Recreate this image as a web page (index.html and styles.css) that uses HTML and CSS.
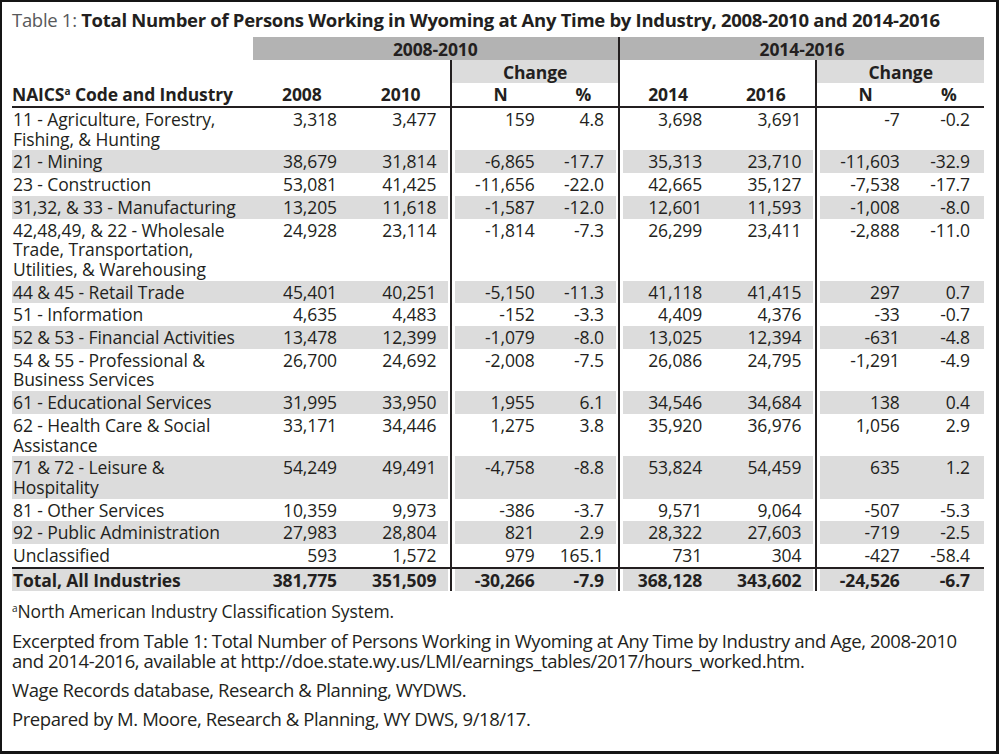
FILE: index.html
```html
<!DOCTYPE html>
<html lang="en">
<head>
<meta charset="utf-8">
<title>Table 1: Total Number of Persons Working in Wyoming</title>
<link rel="stylesheet" href="styles.css">
</head>
<body>
<div class="frame">
  <h1 class="title"><span class="lbl">Table 1:</span> Total Number of Persons Working in Wyoming at Any Time by Industry, 2008-2010 and 2014-2016</h1>
  <table class="data">
    <colgroup>
      <col class="c-ind"><col class="c-num"><col class="c-num2"><col class="c-n"><col class="c-p"><col class="c-num"><col class="c-num2"><col class="c-n"><col class="c-p2">
    </colgroup>
    <thead>
      <tr class="h1">
        <th></th>
        <th colspan="4" class="band">2008-2010</th>
        <th colspan="4" class="band sep">2014-2016</th>
      </tr>
      <tr class="h2">
        <th></th><th></th><th></th>
        <th colspan="2" class="lband sep">Change</th>
        <th class="sep"></th><th></th>
        <th colspan="2" class="lband sep">Change</th>
      </tr>
      <tr class="h3">
        <th class="ind">NAICS<sup>a</sup> Code and Industry</th>
        <th>2008</th><th>2010</th>
        <th class="sep">N</th><th>%</th>
        <th class="sep">2014</th><th>2016</th>
        <th class="sep">N</th><th>%</th>
      </tr>
    </thead>
    <tbody>
      <tr><td class="ind">11 - Agriculture, Forestry,<br>Fishing, &amp; Hunting</td><td>3,318</td><td class="pre">3,477</td><td class="sep">159</td><td class="pre">4.8</td><td class="sep">3,698</td><td class="pre">3,691</td><td class="sep">-7</td><td>-0.2</td></tr>
      <tr class="sh"><td class="ind">21 - Mining</td><td>38,679</td><td class="pre">31,814</td><td class="sep">-6,865</td><td class="pre">-17.7</td><td class="sep">35,313</td><td class="pre">23,710</td><td class="sep">-11,603</td><td>-32.9</td></tr>
      <tr><td class="ind">23 - Construction</td><td>53,081</td><td class="pre">41,425</td><td class="sep">-11,656</td><td class="pre">-22.0</td><td class="sep">42,665</td><td class="pre">35,127</td><td class="sep">-7,538</td><td>-17.7</td></tr>
      <tr class="sh"><td class="ind">31,32, &amp; 33 - Manufacturing</td><td>13,205</td><td class="pre">11,618</td><td class="sep">-1,587</td><td class="pre">-12.0</td><td class="sep">12,601</td><td class="pre">11,593</td><td class="sep">-1,008</td><td>-8.0</td></tr>
      <tr><td class="ind">42,48,49, &amp; 22 - Wholesale<br>Trade, Transportation,<br>Utilities, &amp; Warehousing</td><td>24,928</td><td class="pre">23,114</td><td class="sep">-1,814</td><td class="pre">-7.3</td><td class="sep">26,299</td><td class="pre">23,411</td><td class="sep">-2,888</td><td>-11.0</td></tr>
      <tr class="sh"><td class="ind">44 &amp; 45 - Retail Trade</td><td>45,401</td><td class="pre">40,251</td><td class="sep">-5,150</td><td class="pre">-11.3</td><td class="sep">41,118</td><td class="pre">41,415</td><td class="sep">297</td><td>0.7</td></tr>
      <tr><td class="ind">51 - Information</td><td>4,635</td><td class="pre">4,483</td><td class="sep">-152</td><td class="pre">-3.3</td><td class="sep">4,409</td><td class="pre">4,376</td><td class="sep">-33</td><td>-0.7</td></tr>
      <tr class="sh"><td class="ind">52 &amp; 53 - Financial Activities</td><td>13,478</td><td class="pre">12,399</td><td class="sep">-1,079</td><td class="pre">-8.0</td><td class="sep">13,025</td><td class="pre">12,394</td><td class="sep">-631</td><td>-4.8</td></tr>
      <tr><td class="ind">54 &amp; 55 - Professional &amp;<br>Business Services</td><td>26,700</td><td class="pre">24,692</td><td class="sep">-2,008</td><td class="pre">-7.5</td><td class="sep">26,086</td><td class="pre">24,795</td><td class="sep">-1,291</td><td>-4.9</td></tr>
      <tr class="sh"><td class="ind">61 - Educational Services</td><td>31,995</td><td class="pre">33,950</td><td class="sep">1,955</td><td class="pre">6.1</td><td class="sep">34,546</td><td class="pre">34,684</td><td class="sep">138</td><td>0.4</td></tr>
      <tr><td class="ind">62 - Health Care &amp; Social<br>Assistance</td><td>33,171</td><td class="pre">34,446</td><td class="sep">1,275</td><td class="pre">3.8</td><td class="sep">35,920</td><td class="pre">36,976</td><td class="sep">1,056</td><td>2.9</td></tr>
      <tr class="sh"><td class="ind">71 &amp; 72 - Leisure &amp;<br>Hospitality</td><td>54,249</td><td class="pre">49,491</td><td class="sep">-4,758</td><td class="pre">-8.8</td><td class="sep">53,824</td><td class="pre">54,459</td><td class="sep">635</td><td>1.2</td></tr>
      <tr><td class="ind">81 - Other Services</td><td>10,359</td><td class="pre">9,973</td><td class="sep">-386</td><td class="pre">-3.7</td><td class="sep">9,571</td><td class="pre">9,064</td><td class="sep">-507</td><td>-5.3</td></tr>
      <tr class="sh"><td class="ind">92 - Public Administration</td><td>27,983</td><td class="pre">28,804</td><td class="sep">821</td><td class="pre">2.9</td><td class="sep">28,322</td><td class="pre">27,603</td><td class="sep">-719</td><td>-2.5</td></tr>
      <tr><td class="ind">Unclassified</td><td>593</td><td class="pre">1,572</td><td class="sep">979</td><td class="pre">165.1</td><td class="sep">731</td><td class="pre">304</td><td class="sep">-427</td><td>-58.4</td></tr>
      <tr class="sh total"><td class="ind">Total, All Industries</td><td>381,775</td><td class="pre">351,509</td><td class="sep">-30,266</td><td class="pre">-7.9</td><td class="sep">368,128</td><td class="pre">343,602</td><td class="sep">-24,526</td><td>-6.7</td></tr>
    </tbody>
  </table>
  <div class="notes">
    <p class="fn"><sup>a</sup>North American Industry Classification System.</p>
    <p class="cond">Excerpted from Table 1: Total Number of Persons Working in Wyoming at Any Time by Industry and Age, 2008-2010<br>and 2014-2016, available at http://doe.state.wy.us/LMI/earnings_tables/2017/hours_worked.htm.</p>
    <p class="cond">Wage Records database, Research &amp; Planning, WYDWS.</p>
    <p class="cond">Prepared by M. Moore, Research &amp; Planning, WY DWS, 9/18/17.</p>
  </div>
</div>
</body>
</html>
```
FILE: styles.css
```css
html, body {
  margin: 0;
  padding: 0;
  background: #ffffff;
}
body {
  font-family: "Open Sans", "Noto Sans", sans-serif;
  color: #231f20;
}
.frame {
  box-sizing: border-box;
  width: 999px;
  height: 754px;
  border: 2px solid #151515;
  border-right-width: 3px;
  border-bottom-width: 3px;
  padding: 0 0 0 10px;
  background: #fff;
}
.title {
  margin: 0;
  padding: 6px 0 0 0;
  height: 29px;
  font-size: 18.5px;
  line-height: 24px;
  font-weight: 700;
  letter-spacing: -0.3px;
  color: #231f20;
  white-space: nowrap;
}
.title .lbl {
  font-weight: 400;
  color: #58595b;
}
.data {
  border-collapse: separate;
  border-spacing: 0;
  table-layout: fixed;
  width: 972px;
  font-size: 17.5px;
  letter-spacing: -0.1px;
}
.c-ind { width: 240px; }
.c-num { width: 98px; }
.c-num2 { width: 99px; }
.c-n { width: 98px; }
.c-p { width: 69px; }
.c-p2 { width: 70px; }
.data th {
  font-weight: 700;
  padding: 0;
  height: 23px;
  line-height: 22px;
  text-align: center;
  vertical-align: middle;
}
.data th.ind {
  text-align: left;
}
.data .band {
  background: #b3b3b3;
}
.data .lband {
  background: #dcdcdc;
}
.data .sep {
  border-left: 2px solid #231f20;
}
.h3 th {
  border-bottom: 2px solid #231f20;
  height: 22px;
  vertical-align: bottom;
  padding-bottom: 1px;
}
.data sup {
  font-size: 10px;
  line-height: 0;
  vertical-align: 6px;
  letter-spacing: 0;
}
.data td {
  padding: 2px 14px 1px 0;
  line-height: 19.7px;
  text-align: right;
  vertical-align: top;
  white-space: nowrap;
}
.data td.ind {
  text-align: left;
  padding-left: 1px;
  padding-right: 0;
}
.data td.sep {
  box-shadow: inset 3px 0 0 #fff;
}
.data td.pre {
  box-shadow: inset -2px 0 0 #fff;
}
.data tr.sh td {
  background: #dcdcdc;
}
.data tr.total td {
  font-weight: 700;
  border-top: 2px solid #231f20;
}
.data tr.total td.sep {
  border-left: 2px solid #231f20;
}
.notes {
  padding-top: 10px;
}
.notes p {
  margin: 0;
}
.fn {
  font-size: 17.5px;
  line-height: 20px;
  letter-spacing: -0.1px;
  margin-bottom: 10px !important;
}
.fn sup {
  font-size: 10px;
  line-height: 0;
  vertical-align: 6px;
}
.cond {
  font-size: 18.5px;
  line-height: 20px;
  letter-spacing: -0.42px;
  margin-bottom: 9px !important;
}
```
